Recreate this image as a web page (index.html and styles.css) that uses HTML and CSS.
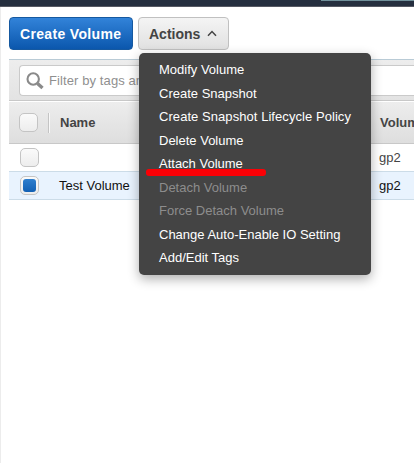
FILE: index.html
```html
<!DOCTYPE html>
<html lang="en">
<head>
<meta charset="utf-8">
<title>Volumes</title>
<link rel="stylesheet" href="styles.css">
</head>
<body>
<header class="topbar"><span class="topbar-tab"></span></header>
<main class="panel">
  <div class="toolbar">
    <button class="btn btn-primary">Create Volume</button>
    <div class="dropdown">
      <button class="btn btn-default">Actions
        <svg class="caret" width="10" height="7" viewBox="0 0 10 7"><path d="M1 5.8 5 1.6l4 4.2" fill="none" stroke="#444" stroke-width="1.5"/></svg>
      </button>
      <ul class="menu">
        <li>Modify Volume</li>
        <li>Create Snapshot</li>
        <li class="long">Create Snapshot Lifecycle Policy</li>
        <li>Delete Volume</li>
        <li class="marked">Attach Volume</li>
        <li class="disabled">Detach Volume</li>
        <li class="disabled">Force Detach Volume</li>
        <li>Change Auto-Enable IO Setting</li>
        <li>Add/Edit Tags</li>
      </ul>
    </div>
  </div>
  <div class="filter">
    <div class="search">
      <svg width="18" height="18" viewBox="0 0 18 18" fill="none" stroke="#8a8a8a"><circle cx="7.2" cy="7" r="5.7" stroke-width="2.1"/><path d="M11.5 11.5 16.5 16" stroke-width="3.4"/></svg>
      <span>Filter by tags and</span>
    </div>
  </div>
  <div class="row head">
    <span class="check"></span><span class="name">Name</span><span class="type">Volume</span>
  </div>
  <div class="row first">
    <span class="check"></span><span class="name"></span><span class="type">gp2</span>
  </div>
  <div class="row selected">
    <span class="check on"></span><span class="name">Test Volume</span><span class="type">gp2</span>
  </div>
</main>
</body>
</html>
```
FILE: styles.css
```css
* { box-sizing: border-box; }
body {
  margin: 0;
  height: 463px;
  overflow: hidden;
  background: #fff;
  font: 13px/16px "Liberation Sans", Arial, sans-serif;
  color: #111;
}
.topbar {
  height: 7px;
  background: #252f3f;
  border-bottom: 1px solid #565963;
}
.topbar-tab {
  display: block;
  height: 1px;
  margin-left: 321px;
  background: #71919b;
}
.panel {
  height: 456px;
  padding-left: 8px;
  border-left: 1px solid #ececec;
  overflow: hidden;
}
.toolbar {
  display: flex;
  gap: 5px;
  height: 52px;
  padding-top: 10px;
}
.btn {
  display: flex;
  align-items: center;
  height: 33px;
  border-radius: 4px;
  font: bold 14px/16px "Liberation Sans", Arial, sans-serif;
  white-space: nowrap;
}
.btn-primary {
  width: 124px;
  padding: 0 0 0 10px;
  color: #fff;
  background: linear-gradient(#3283d9, #0b57ad);
  border: 1px solid #1659a0;
  letter-spacing: .33px;
}
.btn-default {
  width: 91px;
  padding: 0 0 0 10px;
  color: #444;
  background: linear-gradient(#f4f4f4, #e1e1e1);
  border: 1px solid #c0c0c0;
}
.caret { margin-left: 7px; }
.dropdown { position: relative; }
.menu {
  position: absolute;
  z-index: 2;
  left: 1px;
  top: 36px;
  width: 232px;
  height: 222px;
  margin: 0;
  padding: 5px 20px;
  list-style: none;
  background: #444;
  border-radius: 5px;
  box-shadow: 0 4px 12px rgba(0, 0, 0, .32);
  color: #fff;
  line-height: 23.5px;
  white-space: nowrap;
}
.menu li { position: relative; height: 23.5px; }
.menu .long { letter-spacing: .06px; }
.menu .disabled { color: #8d8d8d; }
.menu .marked::after {
  content: "";
  position: absolute;
  z-index: 1;
  left: -13px;
  top: 17px;
  width: 120px;
  height: 7px;
  border-radius: 3px;
  background: #fb0005;
}
.filter {
  height: 42px;
  padding: 5px 0 0 10px;
  background: linear-gradient(#ededed, #e3e3e3);
  border-top: 1px solid #b9cbd6;
  border-bottom: 1px solid #c8c8c8;
}
.search {
  display: flex;
  align-items: center;
  gap: 5px;
  height: 31px;
  padding-left: 6px;
  background: #fff;
  border: 1px solid #cacaca;
  border-right: 0;
  border-radius: 4px 0 0 4px;
  color: #8f8f8f;
  letter-spacing: .1px;
  white-space: nowrap;
}
.row {
  display: flex;
  align-items: center;
  height: 28px;
  padding-left: 11px;
}
.check {
  display: flex;
  align-items: center;
  justify-content: center;
  flex: none;
  width: 19px;
  height: 19px;
  border: 1px solid #c4c4c4;
  border-radius: 5px;
  background: linear-gradient(#fafafa, #ededed);
}
.check.on::before {
  content: "";
  width: 13px;
  height: 13px;
  border-radius: 3px;
  background: linear-gradient(#2f7fce, #1260b4);
}
.name { width: 340px; padding-left: 20px; flex: none; }
.type { flex: none; color: #444; }
.head {
  height: 43px;
  padding-left: 10px;
  background: linear-gradient(#ededed, #dedede);
  border-top: 1px solid #fff;
  border-bottom: 1px solid #c8c8c8;
  font-weight: bold;
  color: #444;
}
.head .name {
  width: 332px;
  margin-left: 10px;
  padding-left: 11px;
  border-left: 1px solid #c4c4c4;
  box-shadow: inset 1px 0 #f8f8f8;
  line-height: 20px;
}
.first { height: 27px; }
.selected {
  height: 29px;
  background: #e9f3fe;
  border-top: 1px solid #ccdce8;
  border-bottom: 1px solid #ccdce8;
}
.selected .type { color: #111; }
```
